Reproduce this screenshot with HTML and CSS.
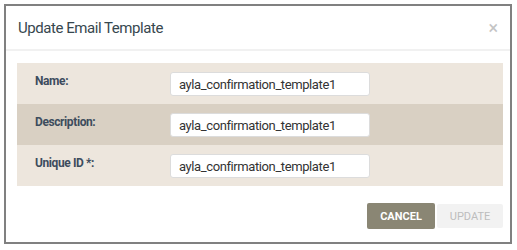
FILE: index.html
```html
<!DOCTYPE html>
<html lang="en">
<head>
    <meta charset="UTF-8">
    <title>Update Email Template</title>
    <link rel="stylesheet" href="styles.css">
</head>
<body>
    <div class="modal">
        <div class="modal-header">
            <h2 class="modal-title">Update Email Template</h2>
            <span class="close">&times;</span>
        </div>
        <div class="modal-body">
            <div class="form-row">
                <label for="name">Name:</label>
                <input type="text" id="name" value="ayla_confirmation_template1">
            </div>
            <div class="form-row alt">
                <label for="description">Description:</label>
                <input type="text" id="description" value="ayla_confirmation_template1">
            </div>
            <div class="form-row">
                <label for="uniqueId">Unique ID *:</label>
                <input type="text" id="uniqueId" value="ayla_confirmation_template1">
            </div>
        </div>
        <div class="modal-footer">
            <button class="btn btn-cancel">Cancel</button>
            <button class="btn btn-update" disabled>Update</button>
        </div>
    </div>
</body>
</html>
```

FILE: styles.css
```css
body {
    margin: 0;
    background: #fff;
    font-family: Roboto, 'Liberation Sans', sans-serif;
}
.modal {
    margin: 4px;
    width: 504px;
    height: 236px;
    border: 2px solid #808080;
    background: #fff;
}
.modal-header {
    display: flex;
    align-items: center;
    justify-content: space-between;
    height: 43px;
    padding: 0 12px 0 12px;
    border-bottom: 2px solid #f1f1f1;
}
.modal-title {
    margin: 0;
    font-size: 15px;
    font-weight: 400;
    letter-spacing: -0.45px;
    color: #37474f;
}
.close {
    font-size: 18px;
    line-height: 1;
    color: #c4c4c4;
}
.modal-body {
    margin: 12px 7px 0 11px;
}
.form-row {
    display: flex;
    align-items: flex-start;
    height: 41px;
    padding-left: 18px;
    background: #ede6dd;
}
.form-row.alt {
    background: #d9d0c3;
}
label {
    width: 135px;
    padding-top: 11px;
    font-size: 12px;
    line-height: 15px;
    font-weight: 700;
    letter-spacing: -0.4px;
    color: #3d4c5d;
}
input {
    box-sizing: border-box;
    width: 200px;
    height: 24px;
    margin-top: 9px;
    padding: 0 8px;
    border: 1px solid #dcdcdc;
    border-radius: 3px;
    background: #fff;
    font-family: inherit;
    font-size: 13px;
    letter-spacing: -0.4px;
    color: #333;
}
.modal-footer {
    display: flex;
    justify-content: flex-end;
    align-items: center;
    gap: 2px;
    margin-top: 17px;
    padding-right: 7px;
}
.btn {
    height: 26px;
    border: none;
    border-radius: 2px;
    font-family: inherit;
    font-size: 11px;
    text-transform: uppercase;
}
.btn-cancel {
    width: 68px;
    background: #8a8674;
    color: #fff;
    font-weight: 700;
}
.btn-update {
    width: 66px;
    height: 24px;
    background: #f2f2f2;
    color: #bdbdbd;
}
```
